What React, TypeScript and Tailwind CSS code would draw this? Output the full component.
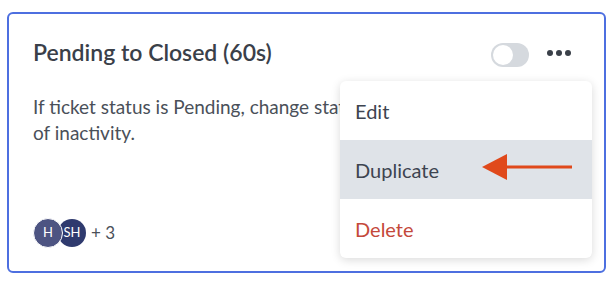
import React from 'react';

const font = { fontFamily: '"Source Sans Pro", Lato, "Liberation Sans", sans-serif' };

// Red pointer drawn over the menu
const ArrowLeft = () => (
  <svg width="90" height="26" viewBox="0 0 90 26" className="absolute left-[142px] top-[14px]">
    <polygon points="0,13 25,0 25,26" fill="#e0491b" />
    <rect x="22" y="11.5" width="68" height="3" fill="#e0491b" />
  </svg>
);

export default function App() {
  return (
    <div className="w-[614px] h-[282px] bg-white pt-[12px] pl-[7px]" style={font}>
      <div className="relative w-[599px] h-[261px] border-2 border-[#4d6fe0] rounded-[6px] px-6 pt-[24px] pb-[23px] flex flex-col">
        <div className="flex h-[28px]">
          <h2 className="text-[23px] leading-[28px] font-semibold text-[#3a4049]">Pending to Closed (60s)</h2>
          <div className="ml-auto flex items-start">
            <div className="mt-[5px] w-[38px] h-6 rounded-full bg-[#d5d9de] p-[2px] mr-[18px]">
              <div className="w-5 h-5 rounded-full bg-white" />
            </div>
            <div className="mt-[12px] flex gap-[3px] mr-[9px]">
              <span className="w-[6px] h-[6px] rounded-full bg-[#3a4049]" />
              <span className="w-[6px] h-[6px] rounded-full bg-[#3a4049]" />
              <span className="w-[6px] h-[6px] rounded-full bg-[#3a4049]" />
            </div>
          </div>
        </div>

        <p className="mt-[28px] text-[19px] leading-[26px] text-[#4a5059] whitespace-nowrap">
          If ticket status is Pending, change status to Closed after 60 seconds
          <br />
          of inactivity.
        </p>

        <div className="mt-auto flex items-center">
          <div className="flex items-center">
            <div className="relative z-10 w-[30px] h-[30px] rounded-full bg-[#4d5482] border border-white flex items-center justify-center text-[13px] text-white">
              H
            </div>
            <div className="-ml-[5px] w-[28px] h-[28px] rounded-full bg-[#2f3a6e] flex items-center justify-center text-[13px] text-white">
              SH
            </div>
          </div>
          <span className="ml-[5px] text-[17px] text-[#4a5059]">+ 3</span>
        </div>

        <div className="absolute top-[67px] right-[12px] w-[252px] bg-white rounded-[6px] shadow-[0_2px_10px_rgba(0,0,0,0.15)] overflow-hidden">
          <div className="h-[59px] flex items-center pl-[15px] text-[20px] text-[#3d4450]">Edit</div>
          <div className="relative h-[59px] flex items-center pl-[15px] text-[20px] text-[#3d4450] bg-[#dfe3e8]">
            Duplicate
            <ArrowLeft />
          </div>
          <div className="h-[59px] flex items-center pl-[15px] text-[20px] text-[#c4493b]">Delete</div>
        </div>
      </div>
    </div>
  );
}
